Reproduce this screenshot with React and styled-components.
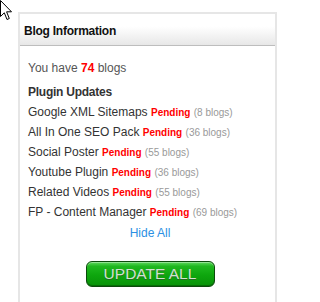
import React from "react";
import styled, { createGlobalStyle } from "styled-components";

const Global = createGlobalStyle`
  html, body { margin: 0; padding: 0; background: #fff; }
  body { font-family: Arial, "Liberation Sans", Helvetica, sans-serif; }
`;

const Page = styled.div`
  position: relative;
  width: 297px;
  height: 302px;
  overflow: hidden;
  padding: 12px 0 0 18px;
  box-sizing: border-box;
`;

const Cursor = styled.svg`
  position: absolute;
  left: 0;
  top: 0;
`;

const Panel = styled.div`
  width: 259px;
  box-sizing: border-box;
  border: 2px solid #e6e6e6;
  border-bottom: none;
  height: 300px;
`;

const Header = styled.div`
  height: 32px;
  line-height: 32px;
  padding: 1px 0 0 4px;
  box-sizing: border-box;
  background: linear-gradient(#ffffff 0%, #ffffff 40%, #e7e7e7 100%);
  border-bottom: 1px solid #bdbdbd;
  font-size: 12px;
  font-weight: bold;
  letter-spacing: -0.25px;
  color: #111;
`;

const Body = styled.div`
  padding: 12px 3px 0 8px;
  font-size: 12px;
  line-height: 20px;
  color: #333;
`;

const Line = styled.div`
  margin-top: ${(p) => p.$mt || 0}px;
  color: ${(p) => p.$color || "#333"};
  font-weight: ${(p) => (p.$bold ? "bold" : "normal")};
  letter-spacing: ${(p) => (p.$bold ? "-0.25px" : "0")};
  white-space: nowrap;
`;

const Count = styled.b`
  color: #f00;
`;

const Pending = styled.span`
  font-size: 10px;
  line-height: 1;
  font-weight: bold;
  color: #f00;
`;

const Blogs = styled.span`
  font-size: 10px;
  line-height: 1;
  color: #999;
`;

const Center = styled.div`
  text-align: center;
  margin-top: ${(p) => p.$mt || 0}px;
`;

const Link = styled.a`
  color: #2b8fe3;
  text-decoration: none;
  font-size: 12px;
`;

const Button = styled.button`
  width: 129px;
  height: 26px;
  padding: 0;
  border: 1px solid #0b4a0b;
  border-radius: 6px;
  background: linear-gradient(#5fd85f 0%, #1fb81f 18%, #0ea60e 55%, #089208 100%);
  box-shadow: inset 0 1px 0 rgba(255,255,255,0.35), inset 0 -1px 0 rgba(0,0,0,0.25);
  font-family: Arial, "Liberation Sans", sans-serif;
  font-size: 15.5px;
  color: #cfe3cf;
  text-shadow: 0 1px 0 #246b24;
  cursor: pointer;
  line-height: 24px;
`;

const plugins = [
  ["Google XML Sitemaps", 8],
  ["All In One SEO Pack", 36],
  ["Social Poster", 55],
  ["Youtube Plugin", 36],
  ["Related Videos", 55],
  ["FP - Content Manager", 69],
];

export default function App() {
  return (
    <>
      <Global />
      <Page>
        <Panel>
          <Header>Blog Information</Header>
          <Body>
            <Line $color="#555">
              You have <Count>74</Count> blogs
            </Line>
            <Line $bold $mt={4}>Plugin Updates</Line>
            {plugins.map(([name, n]) => (
              <Line key={name}>
                {name} <Pending>Pending</Pending> <Blogs>({n} blogs)</Blogs>
              </Line>
            ))}
            <Center $mt={1}>
              <Link href="#">Hide All</Link>
            </Center>
            <Center $mt={18}>
              <Button>UPDATE ALL</Button>
            </Center>
          </Body>
        </Panel>
        <Cursor width="13" height="21" viewBox="0 0 13 21">
          <path
            d="M0.5 0.5 L0.5 16.5 L4.3 12.8 L7 19.5 L9.3 18.5 L6.6 11.8 L11.5 11.8 Z"
            fill="#fff"
            stroke="#000"
            strokeWidth="1"
          />
        </Cursor>
      </Page>
    </>
  );
}
